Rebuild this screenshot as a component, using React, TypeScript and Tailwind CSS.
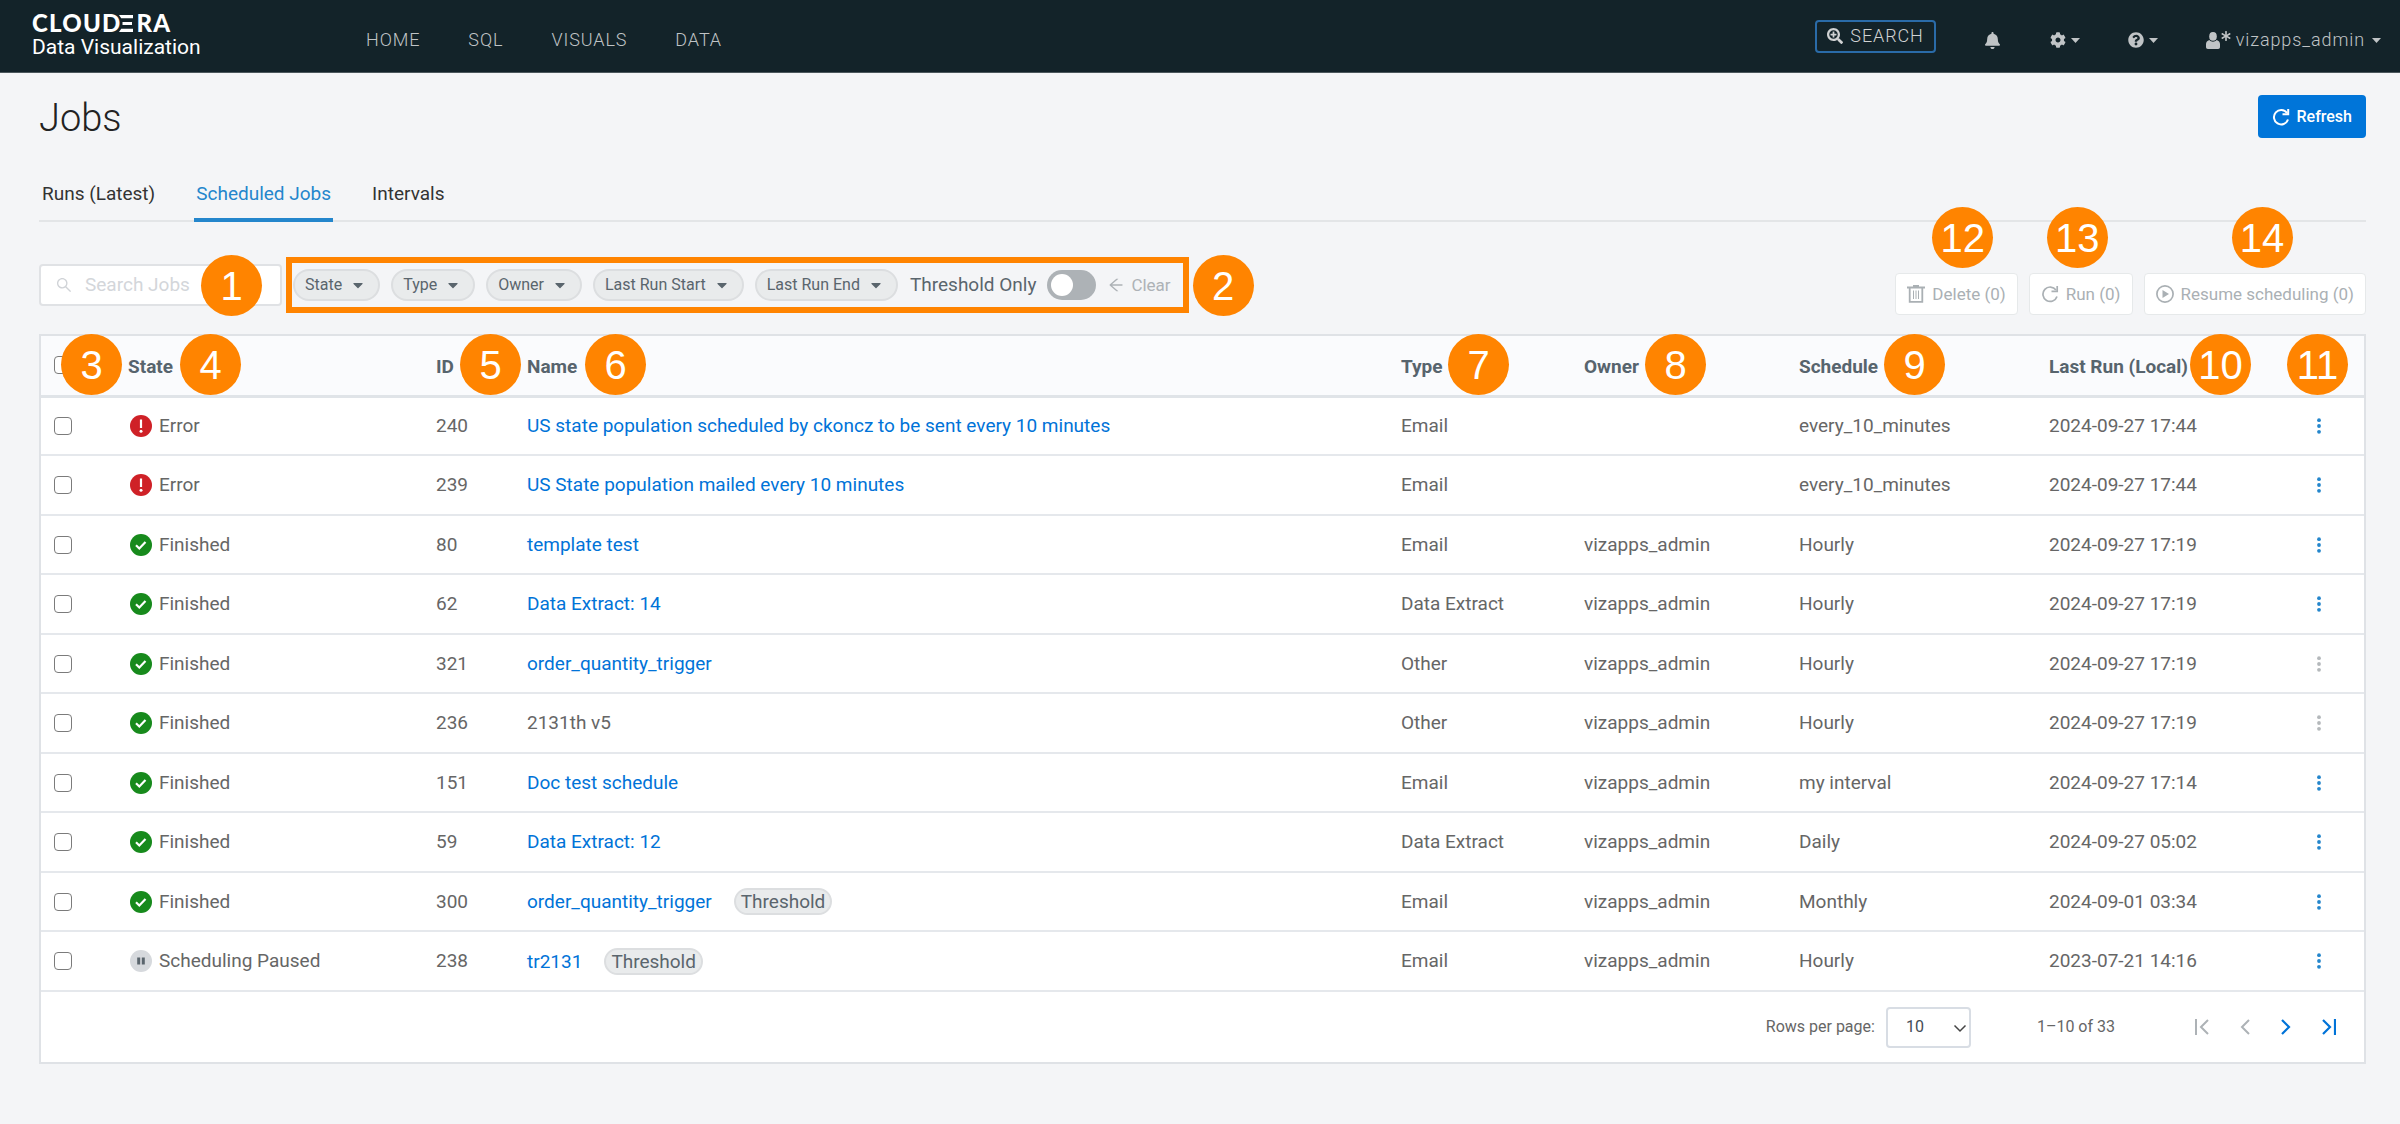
import React from "react";
import { FaSearchPlus, FaBell, FaCog, FaQuestionCircle, FaCaretDown, FaAsterisk } from "react-icons/fa";
import { AiOutlineArrowLeft, AiOutlineSearch } from "react-icons/ai";

const LogoE = () => (
  <svg className="mr-0.5 -ml-0.5" width="15" height="17" viewBox="0 0 15 17" aria-hidden="true" fill="currentColor">
    <path d="M0 0h14v3.200H2.200zM3.500 6.900h9.500v3.200H3.500zM2.200 13.800H14V17H0z" />
  </svg>
);

const Caret = () => (
  <svg width="9" height="5" viewBox="0 0 9 5" aria-hidden="true" fill="currentColor">
    <path d="M0 0h9L4.500 5z" />
  </svg>
);

const UserGlyph = () => (
  <svg width="14" height="17" viewBox="0 0 14 17" aria-hidden="true" fill="currentColor">
    <ellipse cx="7" cy="4.400" rx="3.800" ry="4.400" />
    <path d="M3.300 8c1 1.100 2.300 1.700 3.700 1.700s2.700-.6 3.700-1.700C12.700 8.700 14 10.200 14 12v3c0 1.200-.7 2-1.900 2H1.900C.7 17 0 16.200 0 15v-3c0-1.800 1.300-3.300 3.300-4z" />
  </svg>
);

const TrashGlyph = () => (
  <svg width="18" height="18" viewBox="0 0 18 18" aria-hidden="true" fill="none" stroke="currentColor">
    <path d="M0 2.500h18M6 1h6" strokeWidth="2" />
    <path d="M2.700 3v13.800h12.600V3" strokeWidth="1.800" />
    <path d="M6.500 5.500v8.500M9 5.500v8.500M11.500 5.500v8.500" strokeWidth="1" />
  </svg>
);

const PlayGlyph = () => (
  <svg width="18" height="18" viewBox="0 0 18 18" aria-hidden="true">
    <circle cx="9" cy="9" r="8.100" fill="none" stroke="currentColor" strokeWidth="1.700" />
    <path d="M6.500 5v8l6.500-4z" fill="currentColor" />
  </svg>
);

const Reload = ({ bold = false }: { bold?: boolean }) => (
  <svg width="18" height="18" viewBox="0 0 18 18" aria-hidden="true" fill="none" stroke="currentColor" strokeWidth={bold ? "2" : "1.700"}>
    <path d="M16 11.500A7.200 7.200 0 1 1 15 5" />
    <path d="M10.500 6.300h5.700V1" />
  </svg>
);

const ErrorGlyph = () => (
  <svg width="22" height="22" viewBox="0 0 22 22" aria-hidden="true">
    <circle cx="11" cy="11" r="11" fill="#cf2127" />
    <path d="M11 4.500v8.500" stroke="#fff" strokeWidth="2.200" />
    <circle cx="11" cy="16.200" r="1.500" fill="#fff" />
  </svg>
);
const FinishedGlyph = () => (
  <svg width="22" height="22" viewBox="0 0 22 22" aria-hidden="true">
    <circle cx="11" cy="11" r="11" fill="#178a1c" />
    <path d="M6 11.300l3.300 3.200 6.200-6.500" stroke="#fff" strokeWidth="2.200" fill="none" />
  </svg>
);
const PausedGlyph = () => (
  <svg width="22" height="22" viewBox="0 0 22 22" aria-hidden="true">
    <circle cx="11" cy="11" r="11" fill="#d6d9dd" />
    <path d="M8.700 7.500v7M13.300 7.500v7" stroke="#5a656d" strokeWidth="3" />
  </svg>
);

const Pin = ({ n, place }: { n: number; place: string }) => (
  <span className={`pointer-events-none absolute z-10 flex size-[61px] items-center justify-center rounded-full bg-[#ff8400] font-['Liberation_Sans',sans-serif] text-[40px] leading-none font-normal text-white ${place}`}>
    {n}
  </span>
);

type Job = {
  state: "Error" | "Finished" | "Scheduling Paused";
  id: number;
  name: string;
  link?: boolean;
  threshold?: boolean;
  type: string;
  owner: string;
  schedule: string;
  lastRun: string;
  muted?: boolean;
};

const jobs: Job[] = [
  { state: "Error", id: 240, name: "US state population scheduled by ckoncz to be sent every 10 minutes", link: true, type: "Email", owner: "", schedule: "every_10_minutes", lastRun: "2024-09-27 17:44" },
  { state: "Error", id: 239, name: "US State population mailed every 10 minutes", link: true, type: "Email", owner: "", schedule: "every_10_minutes", lastRun: "2024-09-27 17:44" },
  { state: "Finished", id: 80, name: "template test", link: true, type: "Email", owner: "vizapps_admin", schedule: "Hourly", lastRun: "2024-09-27 17:19" },
  { state: "Finished", id: 62, name: "Data Extract: 14", link: true, type: "Data Extract", owner: "vizapps_admin", schedule: "Hourly", lastRun: "2024-09-27 17:19" },
  { state: "Finished", id: 321, name: "order_quantity_trigger", link: true, type: "Other", owner: "vizapps_admin", schedule: "Hourly", lastRun: "2024-09-27 17:19", muted: true },
  { state: "Finished", id: 236, name: "2131th v5", type: "Other", owner: "vizapps_admin", schedule: "Hourly", lastRun: "2024-09-27 17:19", muted: true },
  { state: "Finished", id: 151, name: "Doc test schedule", link: true, type: "Email", owner: "vizapps_admin", schedule: "my interval", lastRun: "2024-09-27 17:14" },
  { state: "Finished", id: 59, name: "Data Extract: 12", link: true, type: "Data Extract", owner: "vizapps_admin", schedule: "Daily", lastRun: "2024-09-27 05:02" },
  { state: "Finished", id: 300, name: "order_quantity_trigger", link: true, threshold: true, type: "Email", owner: "vizapps_admin", schedule: "Monthly", lastRun: "2024-09-01 03:34" },
  { state: "Scheduling Paused", id: 238, name: "tr2131", link: true, threshold: true, type: "Email", owner: "vizapps_admin", schedule: "Hourly", lastRun: "2023-07-21 14:16" },
];

const stateGlyph = {
  Error: <ErrorGlyph />,
  Finished: <FinishedGlyph />,
  "Scheduling Paused": <PausedGlyph />,
};

const columns = [
  { label: "State", width: "w-[308px]", pin: 4, place: "left-[52px]" },
  { label: "ID", width: "w-[91px]", pin: 5, place: "left-6" },
  { label: "Name", width: "", pin: 6, place: "left-[58px]" },
  { label: "Type", width: "w-[183px]", pin: 7, place: "left-[47px]" },
  { label: "Owner", width: "w-[215px]", pin: 8, place: "left-[61px]" },
  { label: "Schedule", width: "w-[250px]", pin: 9, place: "left-[85px]" },
  { label: "Last Run (Local)", width: "w-[254px]", pin: 10, place: "left-[141px]" },
];

const filters = ["State", "Type", "Owner", "Last Run Start", "Last Run End"];

const checkbox = "block size-[18px] appearance-none rounded-[4px] border-[1.5px] border-[#7b7b7b] bg-white";
const bulkButton = "relative flex h-[42px] items-center gap-[7px] rounded border border-[#e6e9ea] bg-white px-[11px]";

export default function App() {
  return (
    <div className="min-h-screen bg-[#f4f5f7] font-[Roboto,sans-serif] text-[19px] leading-6 text-[#666]">
      <header className="flex h-[73px] items-center border-b border-[#4c585d] bg-[#132329] pr-[19px] pl-8 text-[18px] text-[#c0c4c6]">
        <a href="#" className="block w-[334px] pt-0.5 text-white">
          <span className="flex h-5 items-center font-[Lato,sans-serif] text-[24px] leading-5 font-black tracking-wider" aria-label="Cloudera">
            CLOUD<LogoE />RA
          </span>
          <span className="block text-[21px] leading-7">Data Visualization</span>
        </a>
        <nav className="flex gap-12 pt-2 font-light tracking-wider">
          <a href="#">HOME</a>
          <a href="#">SQL</a>
          <a href="#">VISUALS</a>
          <a href="#">DATA</a>
        </nav>
        <div className="ml-auto flex items-center font-light">
          <button className="flex h-[33px] items-center gap-[7px] rounded border-2 border-[#2a6ba8] px-2.5 tracking-wider text-[#d0d2d3]">
            <FaSearchPlus className="size-4" />
            SEARCH
          </button>
          <div className="flex items-center pt-2">
            <button aria-label="Notifications" className="ml-12"><FaBell className="size-[17px]" /></button>
            <button aria-label="Settings" className="ml-[49px] flex items-center gap-[5px]"><FaCog className="size-4" /><Caret /></button>
            <button aria-label="Help" className="ml-12 flex items-center gap-[5px]"><FaQuestionCircle className="size-4" /><Caret /></button>
            <button className="ml-12 flex items-center tracking-wider">
              <UserGlyph />
              <FaAsterisk className="mr-[5px] mb-2 ml-px size-[10px]" />
              <span className="mr-[7px]">vizapps_admin</span>
              <Caret />
            </button>
          </div>
        </div>
      </header>

      <main className="pr-[34px] pb-[60px] pl-[39px]">
        <div className="flex items-center justify-between pt-[22px]">
          <h1 className="pt-[3px] text-[38px] leading-10 font-light text-[#222]">Jobs</h1>
          <button className="flex h-[43px] items-center gap-[7px] rounded bg-[#0075d9] px-3.5 text-[16px] font-medium text-white">
            <Reload bold />Refresh
          </button>
        </div>

        <div role="tablist" className="mt-[37px] flex gap-[41px] border-b-2 border-[#e3e5e7] px-[3px] text-[#333]">
          <button role="tab" className="h-[45px] pb-2">Runs (Latest)</button>
          <button role="tab" aria-selected="true" className="relative h-[45px] pb-2 text-[#2486cc] after:absolute after:-inset-x-[2px] after:-bottom-[2px] after:h-1 after:bg-[#2486cc]">Scheduled Jobs</button>
          <button role="tab" className="h-[45px] pb-2">Intervals</button>
        </div>

        <div className="mt-[35px] flex items-start">
          <div className="relative mt-[7px] flex h-[42px] w-[243px] items-center rounded border-2 border-[#e0e2e5] bg-white pl-3.5 text-[#d0d3d7]">
            <AiOutlineSearch className="size-[18px]" />
            <input aria-label="Search Jobs" placeholder="Search Jobs" className="ml-3 w-28 bg-transparent outline-none placeholder:text-[#d3d6da]" />
            <Pin n={1} place="left-[160px] top-[-11px]" />
          </div>
          <div className="relative ml-1 flex h-14 items-center gap-[11px] border-[6px] border-[#ff8400] pr-3 pl-px">
            {filters.map((f) => (
              <button key={f} className="flex h-8 items-center gap-2 rounded-full border-2 border-[#dcdee0] bg-[#e9ebec] pr-3 pl-2.5 text-[16px] text-[#5a656d]">
                {f}
                <FaCaretDown className="size-4" />
              </button>
            ))}
            <label className="flex items-center gap-[11px] pl-px text-[#5a656d]">
              Threshold Only
              <input type="checkbox" role="switch" className="relative h-[30px] w-[49px] appearance-none rounded-full bg-[#adb2b6] after:absolute after:top-1 after:left-1 after:size-[22px] after:rounded-full after:bg-white" />
            </label>
            <button className="flex items-center gap-1.5 text-[17px] text-[#adb2b6]"><AiOutlineArrowLeft className="size-[18px]" />Clear</button>
            <Pin n={2} place="left-full ml-[10px] top-[-8px]" />
          </div>
          <div className="mt-4 ml-auto flex gap-[11px] text-[17px] text-[#aab0b4]">
            <button className={bulkButton}><TrashGlyph />Delete (0)<Pin n={12} place="left-[36px] -top-[67px]" /></button>
            <button className={bulkButton}><Reload />Run (0)<Pin n={13} place="left-[17px] -top-[67px]" /></button>
            <button className={bulkButton}><PlayGlyph />Resume scheduling (0)<Pin n={14} place="left-[87px] -top-[67px]" /></button>
          </div>
        </div>

        <section className="mt-[19px] border-2 border-[#dfe2e6] bg-white">
          <table className="w-full table-fixed border-collapse text-left">
            <thead>
              <tr className="h-[60px] border-b-3 border-[#e0e4e8] bg-[#fafbfd] text-[#57646d]">
                <th className="relative w-[87px] pl-[13px]">
                  <input type="checkbox" aria-label="Select all jobs" className={checkbox} />
                  <Pin n={3} place="left-[20px] top-[-2px]" />
                </th>
                {columns.map((c) => (
                  <th key={c.label} className={`relative pt-1 font-bold whitespace-nowrap ${c.width}`}>
                    {c.label}
                    <Pin n={c.pin} place={`top-[-2px] ${c.place}`} />
                  </th>
                ))}
                <th className="relative w-[61px]" aria-label="Actions"><Pin n={11} place="-left-4 top-[-2px]" /></th>
              </tr>
            </thead>
            <tbody>
              {jobs.map((j) => (
                <tr key={j.id} className="h-[59px] border-b-2 border-[#e5e8ec] even:h-[60px]">
                  <td className="pl-[13px]"><input type="checkbox" aria-label={`Select job ${j.id}`} className={checkbox} /></td>
                  <td><span className="flex items-center gap-[7px] pl-0.5">{stateGlyph[j.state]}{j.state}</span></td>
                  <td>{j.id}</td>
                  <td>
                    {j.link ? <a href="#" className="text-[#0073d8]">{j.name}</a> : j.name}
                    {j.threshold && <span className="ml-[22px] inline-block rounded-full border-2 border-[#dcdee0] bg-[#e9ebec] px-[5px] leading-[23px] text-[#5a656d]">Threshold</span>}
                  </td>
                  <td>{j.type}</td>
                  <td>{j.owner}</td>
                  <td>{j.schedule}</td>
                  <td>{j.lastRun}</td>
                  <td>
                    <button aria-label={`Actions for job ${j.id}`} className={`block pl-3.5 ${j.muted ? "text-[#b4b8bb]" : "text-[#2486cc]"}`}>
                      <svg width="4" height="16" viewBox="0 0 4 16" fill="currentColor" aria-hidden="true">
                        <circle cx="2" cy="2.200" r="1.900" />
                        <circle cx="2" cy="8" r="1.900" />
                        <circle cx="2" cy="13.800" r="1.900" />
                      </svg>
                    </button>
                  </td>
                </tr>
              ))}
            </tbody>
          </table>
          <div className="flex h-[70px] items-center justify-end pr-[28px] text-[16px]">
            <label htmlFor="rows">Rows per page:</label>
            <span className="relative ml-[11px]">
              <select id="rows" className="h-[41px] w-[85px] appearance-none rounded border-2 border-[#d8dde4] bg-white pl-[18px] text-[#444c56]">
                <option>10</option>
              </select>
              <svg className="pointer-events-none absolute top-[17px] right-1" width="14" height="9" viewBox="0 0 14 9" fill="none" stroke="#444" strokeWidth="1.500" aria-hidden="true"><path d="M1.500 1.500L7 7l5.500-5.500" /></svg>
            </span>
            <span className="ml-[66px]">1–10 of 33</span>
            <div className="ml-20 flex items-center gap-[31px] text-[#0073d8]">
              <button aria-label="First page" className="text-[#adb2b6]"><svg width="14" height="16" viewBox="0 0 14 16" fill="none" stroke="currentColor" strokeWidth="2"><path d="M1 0v16M13 1L6 8l7 7" /></svg></button>
              <button aria-label="Previous page" className="text-[#adb2b6]"><svg width="10" height="16" viewBox="0 0 10 16" fill="none" stroke="currentColor" strokeWidth="2"><path d="M9 1L2 8l7 7" /></svg></button>
              <button aria-label="Next page"><svg width="10" height="16" viewBox="0 0 10 16" fill="none" stroke="currentColor" strokeWidth="2.200"><path d="M1 1l7 7-7 7" /></svg></button>
              <button aria-label="Last page"><svg width="14" height="16" viewBox="0 0 14 16" fill="none" stroke="currentColor" strokeWidth="2.200"><path d="M13 0v16M1 1l7 7-7 7" /></svg></button>
            </div>
          </div>
        </section>
      </main>
    </div>
  );
}
